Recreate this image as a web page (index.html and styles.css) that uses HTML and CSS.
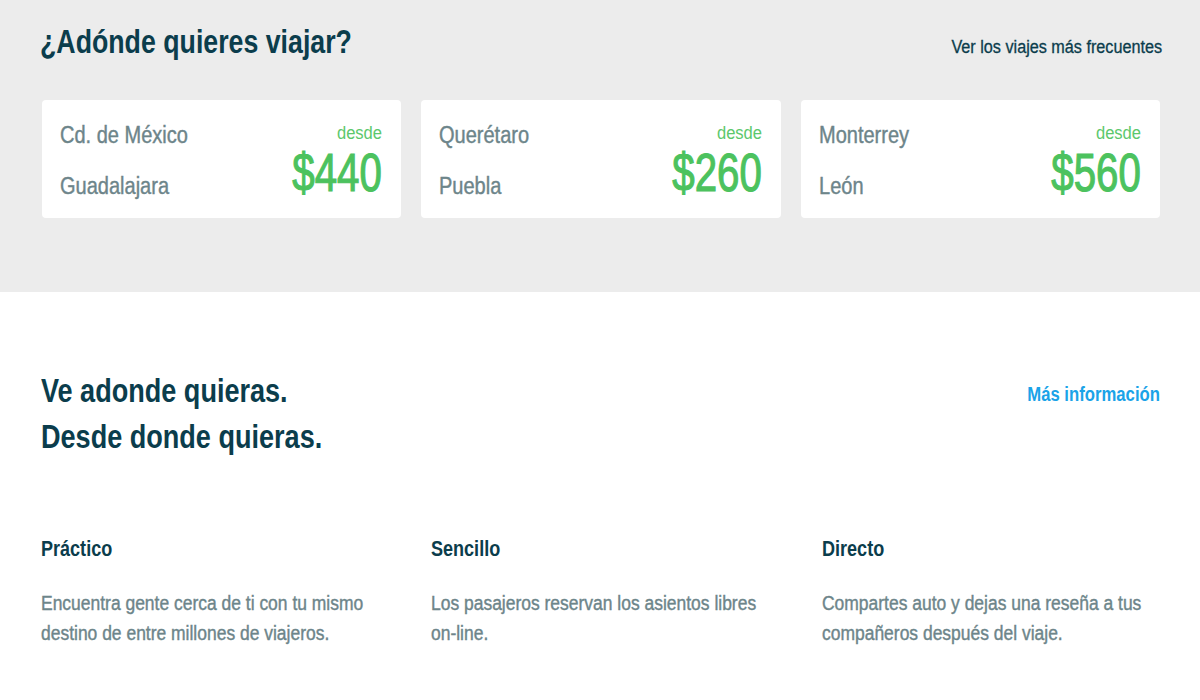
FILE: index.html
```html
<!DOCTYPE html>
<html lang="es">
<head>
<meta charset="utf-8">
<title>BlaBlaCar</title>
<link rel="stylesheet" href="styles.css">
</head>
<body>
<section class="popular">
  <div class="popular-head">
    <h1 class="popular-title">¿Adónde quieres viajar?</h1>
    <a class="popular-link" href="#">Ver los viajes más frecuentes</a>
  </div>
  <div class="cards">
    <a class="card" href="#">
      <div class="route">
        <span class="city">Cd. de México</span>
        <span class="city">Guadalajara</span>
      </div>
      <div class="price">
        <span class="from">desde</span>
        <span class="amount">$440</span>
      </div>
    </a>
    <a class="card" href="#">
      <div class="route">
        <span class="city">Querétaro</span>
        <span class="city">Puebla</span>
      </div>
      <div class="price">
        <span class="from">desde</span>
        <span class="amount">$260</span>
      </div>
    </a>
    <a class="card" href="#">
      <div class="route">
        <span class="city">Monterrey</span>
        <span class="city">León</span>
      </div>
      <div class="price">
        <span class="from">desde</span>
        <span class="amount">$560</span>
      </div>
    </a>
  </div>
</section>
<section class="about">
  <div class="about-head">
    <h2 class="about-title">Ve adonde quieras.<br>Desde donde quieras.</h2>
    <a class="about-link" href="#">Más información</a>
  </div>
  <div class="features">
    <div class="feature">
      <h3 class="feature-title">Práctico</h3>
      <p class="feature-text">Encuentra gente cerca de ti con tu mismo destino de entre millones de viajeros.</p>
    </div>
    <div class="feature">
      <h3 class="feature-title">Sencillo</h3>
      <p class="feature-text">Los pasajeros reservan los asientos libres on-line.</p>
    </div>
    <div class="feature">
      <h3 class="feature-title">Directo</h3>
      <p class="feature-text">Compartes auto y dejas una reseña a tus compañeros después del viaje.</p>
    </div>
  </div>
</section>
</body>
</html>
```
FILE: styles.css
```css
* { box-sizing: border-box; }
html, body { margin: 0; padding: 0; }
body {
  font-family: "Liberation Sans", Arial, sans-serif;
  color: #054752;
  background: #ffffff;
  width: 1200px;
  height: 700px;
  overflow: hidden;
}
a { text-decoration: none; }

/* the reference typeface is a condensed one: the glyphs are narrowed with scaleX */

.popular {
  background: #ececec;
  height: 292px;
  padding: 22px 40px 0 42px;
}
.popular-head {
  display: flex;
  justify-content: space-between;
  align-items: baseline;
}
.popular-title {
  margin: 0 0 0 -2px;
  font-size: 33px;
  font-weight: 700;
  line-height: 40px;
  color: #0b3d4c;
  transform: scaleX(0.81);
  transform-origin: left center;
  white-space: nowrap;
}
.popular-link {
  display: inline-block;
  font-size: 18px;
  color: #0b3d4c;
  margin-right: -2px;
  transform: scaleX(0.9);
  transform-origin: right center;
  white-space: nowrap;
  -webkit-text-stroke: 0.3px #0b3d4c;
}
.cards {
  display: grid;
  grid-template-columns: repeat(3, minmax(0, 1fr));
  gap: 20px;
  margin-top: 38px;
}
.card {
  background: #ffffff;
  border-radius: 4px;
  height: 118px;
  padding: 20px 19px 0 18px;
  display: flex;
  justify-content: space-between;
}
.route {
  display: flex;
  flex-direction: column;
  align-items: flex-start;
  gap: 23px;
  padding-top: 1px;
}
.city {
  display: inline-block;
  font-size: 23px;
  line-height: 28px;
  color: #6d858a;
  transform: scaleX(0.87);
  transform-origin: left center;
  white-space: nowrap;
  -webkit-text-stroke: 0.4px #6d858a;
}
.price {
  display: flex;
  flex-direction: column;
  align-items: flex-end;
  padding-top: 3px;
}
.from {
  display: inline-block;
  font-size: 18px;
  line-height: 20px;
  color: #5cc86c;
  transform: scaleX(0.92);
  transform-origin: right center;
}
.amount {
  display: inline-block;
  font-size: 53px;
  line-height: 59px;
  color: #4cc25e;
  transform: scaleX(0.76);
  transform-origin: right center;
  -webkit-text-stroke: 1.2px #4cc25e;
}

.about {
  padding: 76px 40px 0 41px;
}
.about-head {
  display: flex;
  justify-content: space-between;
  align-items: flex-start;
}
.about-title {
  margin: 0;
  font-size: 33px;
  line-height: 46px;
  font-weight: 700;
  color: #0b3d4c;
  transform: scaleX(0.82);
  transform-origin: left top;
  white-space: nowrap;
}
.about-link {
  display: inline-block;
  font-size: 20px;
  font-weight: 700;
  color: #1aa3e8;
  margin-top: 15px;
  transform: scaleX(0.835);
  transform-origin: right center;
  white-space: nowrap;
}
.features {
  display: grid;
  grid-template-columns: repeat(3, minmax(0, 1fr));
  column-gap: 52px;
  margin-top: 74px;
}
.feature {
  min-width: 0;
}
.feature-title {
  margin: 0;
  font-size: 22px;
  line-height: 30px;
  font-weight: 700;
  color: #0b3d4c;
  transform: scaleX(0.82);
  transform-origin: left center;
}
.feature-text {
  margin: 24px 0 0;
  width: 385px;
  font-size: 20px;
  line-height: 30px;
  color: #6d858a;
  transform: scaleX(0.873);
  transform-origin: left top;
  -webkit-text-stroke: 0.4px #6d858a;
}
```
